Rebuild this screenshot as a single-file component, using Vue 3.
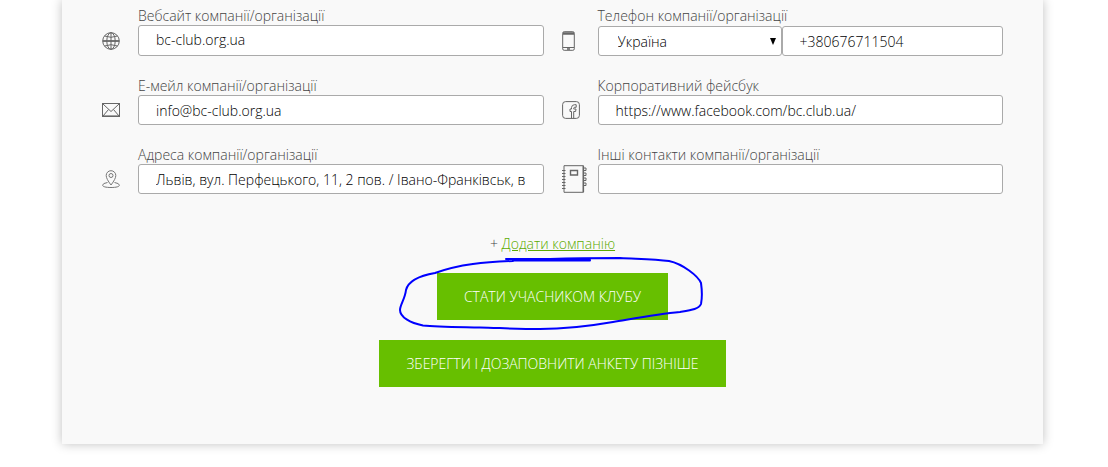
<script setup>
import { ref } from 'vue'

const website = ref('bc-club.org.ua')
const country = ref('Україна')
const phone = ref('+380676711504')
const email = ref('info@bc-club.org.ua')
const facebook = ref('https://www.facebook.com/bc.club.ua/')
const address = ref('Львів, вул. Перфецького, 11, 2 пов. / Івано-Франківськ, в')
const other = ref('')
</script>

<template>
  <form class="card" @submit.prevent>
    <div class="fields">
      <span class="icon">
        <svg width="18" height="18" viewBox="0 0 18 18" aria-hidden="true">
          <circle cx="9" cy="9" r="8.3" />
          <ellipse cx="9" cy="9" rx="4.2" ry="8.3" />
          <path d="M9 .7v16.6M.7 9h16.6M2.600 4Q9 6.600 15.400 4M2.600 14Q9 11.400 15.400 14" />
          <path d="M1 9h16" stroke-width="1.600" />
        </svg>
      </span>
      <div class="field">
        <label for="website">Вебсайт компанії/організації</label>
        <input id="website" v-model="website" class="tall" type="text" />
      </div>

      <span class="icon">
        <svg width="18" height="20" viewBox="0 0 18 20" aria-hidden="true">
          <rect x=".7" y=".7" width="11.600" height="18.600" rx="1.500" />
          <path d="M1 2.500h11" stroke-width="2.500" />
          <path d="M1 16.500h11" />
          <path d="M5 18h3" stroke-width="1.600" />
        </svg>
      </span>
      <div class="field">
        <label for="phone">Телефон компанії/організації</label>
        <div class="phone">
          <div class="picker">
            <select v-model="country" aria-label="Країна">
              <option>Україна</option>
            </select>
            <svg class="arrow" width="6" height="7" viewBox="0 0 6 7" aria-hidden="true"><path d="M0 0h6L3 7z" /></svg>
          </div>
          <input id="phone" v-model="phone" type="tel" />
        </div>
      </div>

      <span class="icon">
        <svg width="18" height="14" viewBox="0 0 18 14" aria-hidden="true">
          <rect x=".5" y=".5" width="17" height="13" />
          <path d="M.5 13.200h17" stroke-width="1.600" />
          <path d="M1 1l8 7.500L17 1M1 13l5.500-6.500M17 13l-5.500-6.500" />
        </svg>
      </span>
      <div class="field">
        <label for="email">Е-мейл компанії/організації</label>
        <input id="email" v-model="email" type="email" />
      </div>

      <span class="icon">
        <svg width="18" height="18" viewBox="0 0 18 18" aria-hidden="true">
          <rect x=".6" y=".6" width="16.800" height="16.800" rx="3" />
          <path d="M9.500 17.500v-7H8V8h1.500V6.500Q9.700 3.800 12.500 3.700h1.700v2.600h-1.500q-1 .1-1 1V8h2.300l-.4 2.500h-1.900v7" />
        </svg>
      </span>
      <div class="field">
        <label for="facebook">Корпоративний фейсбук</label>
        <input id="facebook" v-model="facebook" type="text" />
      </div>

      <span class="icon">
        <svg class="light" width="18" height="18" viewBox="0 0 18 18" aria-hidden="true">
          <path d="M9 15Q4.200 8.800 4.200 5.500a4.800 4.800 0 0 1 9.600 0Q13.800 8.800 9 15z" />
          <circle cx="9" cy="5.500" r="2" />
          <path d="M5.500 12.500Q.6 13.300.6 15.200c0 1.400 3 2.300 8.400 2.300s8.400-.9 8.400-2.300q0-1.900-4.900-2.700" />
        </svg>
      </span>
      <div class="field">
        <label for="address">Адреса компанії/організації</label>
        <input id="address" v-model="address" type="text" />
      </div>

      <span class="icon">
        <svg width="25" height="28" viewBox="0 0 25 28" aria-hidden="true">
          <path d="M2 .7h19.500v26.600H2z" />
          <path d="M21.300 1v26" stroke-width="1.600" />
          <path d="M8.500 5.500h7v4.500h-7z" stroke-width="1.400" />
          <path d="M0 5.500h3.500M0 8.500h3.500M0 11.500h3.500M0 14.500h3.500M0 17.500h3.500M0 20.500h3.500M0 23.500h3.500" />
          <path d="M22 3h2v2.500h-2M22 8h2v2.500h-2M22 13h2v2.500h-2M22 18h2v2.500h-2" />
        </svg>
      </span>
      <div class="field">
        <label for="other">Інші контакти компанії/організації</label>
        <input id="other" v-model="other" type="text" />
      </div>
    </div>

    <div class="actions">
      <p class="add">+ <a href="#">Додати компанію</a></p>
      <button type="submit">СТАТИ УЧАСНИКОМ КЛУБУ</button>
      <button type="button">ЗБЕРЕГТИ І ДОЗАПОВНИТИ АНКЕТУ ПІЗНІШЕ</button>
      <svg class="ink" width="305" height="74" viewBox="399 257 305 74" aria-hidden="true">
        <path d="M506 259H590M513 260.500H590M550 259C580 258 602 258 620 258C640 259 655 259 669 261C683 264 698 276 701 283C702 290 702 299 701 304C699 309 692 310 680 312C658 314 637 318 613 322C590 326 565 329 540 329C518 329 500 328 480 327.500C455 327 437 327 423 325.500C410 323 400 317 400 310C400 305 405 299 406 290C408 282 418 276 435 273C460 264 485 262 513 261" />
      </svg>
    </div>
  </form>
</template>

<style>
body {
  margin: 0;
  background: #fff;
}
</style>

<style scoped>
.card {
  box-sizing: border-box;
  margin: 0 65px 23px 62px;
  padding: 5px 40px 57px;
  background: #f9f9f9;
  box-shadow: 0 0 10px rgba(0, 0, 0, 0.25);
  font-family: "Open Sans", "Noto Sans", sans-serif;
  font-size: 14px;
  font-weight: 300;
  color: #444;
}
.fields {
  display: grid;
  grid-template-columns: 18px minmax(0, 1fr) 18px minmax(0, 1fr);
  gap: 19px 18px;
}
.icon {
  display: flex;
  align-items: center;
  align-self: end;
  height: 30px;
}
svg {
  flex: none;
  fill: none;
  stroke: #666;
  stroke-width: 1;
}
.light {
  stroke: #777;
}
label {
  display: block;
  height: 20px;
  line-height: 22px;
}
input,
select {
  box-sizing: border-box;
  display: block;
  width: 100%;
  height: 30px;
  margin: 0;
  padding: 0 17px;
  border: 1px solid #aaa;
  border-radius: 3px;
  background: #fff;
  font: inherit;
  color: #000;
}
.tall {
  height: 31px;
  padding-bottom: 2px;
}
.phone {
  display: flex;
  padding-top: 1px;
}
.picker {
  position: relative;
  flex: 0 0 184px;
}
select {
  padding: 0 19px;
  appearance: none;
}
.arrow {
  position: absolute;
  top: 12px;
  right: 6px;
  fill: #000;
  stroke: none;
}
.actions {
  position: relative;
  display: flex;
  flex-direction: column;
  align-items: center;
  gap: 20px;
  padding-top: 41px;
}
.add {
  margin: 0;
  line-height: 18px;
}
a {
  color: #5cab00;
  text-decoration: underline;
}
button {
  height: 47px;
  padding: 0 27px;
  border: 0;
  background: #67bf00;
  color: #fff;
  font: inherit;
  cursor: pointer;
}
.ink {
  position: absolute;
  top: 63px;
  left: calc(50% - 154px);
  stroke: #00f;
  stroke-width: 2;
  stroke-linecap: round;
  pointer-events: none;
}
</style>
